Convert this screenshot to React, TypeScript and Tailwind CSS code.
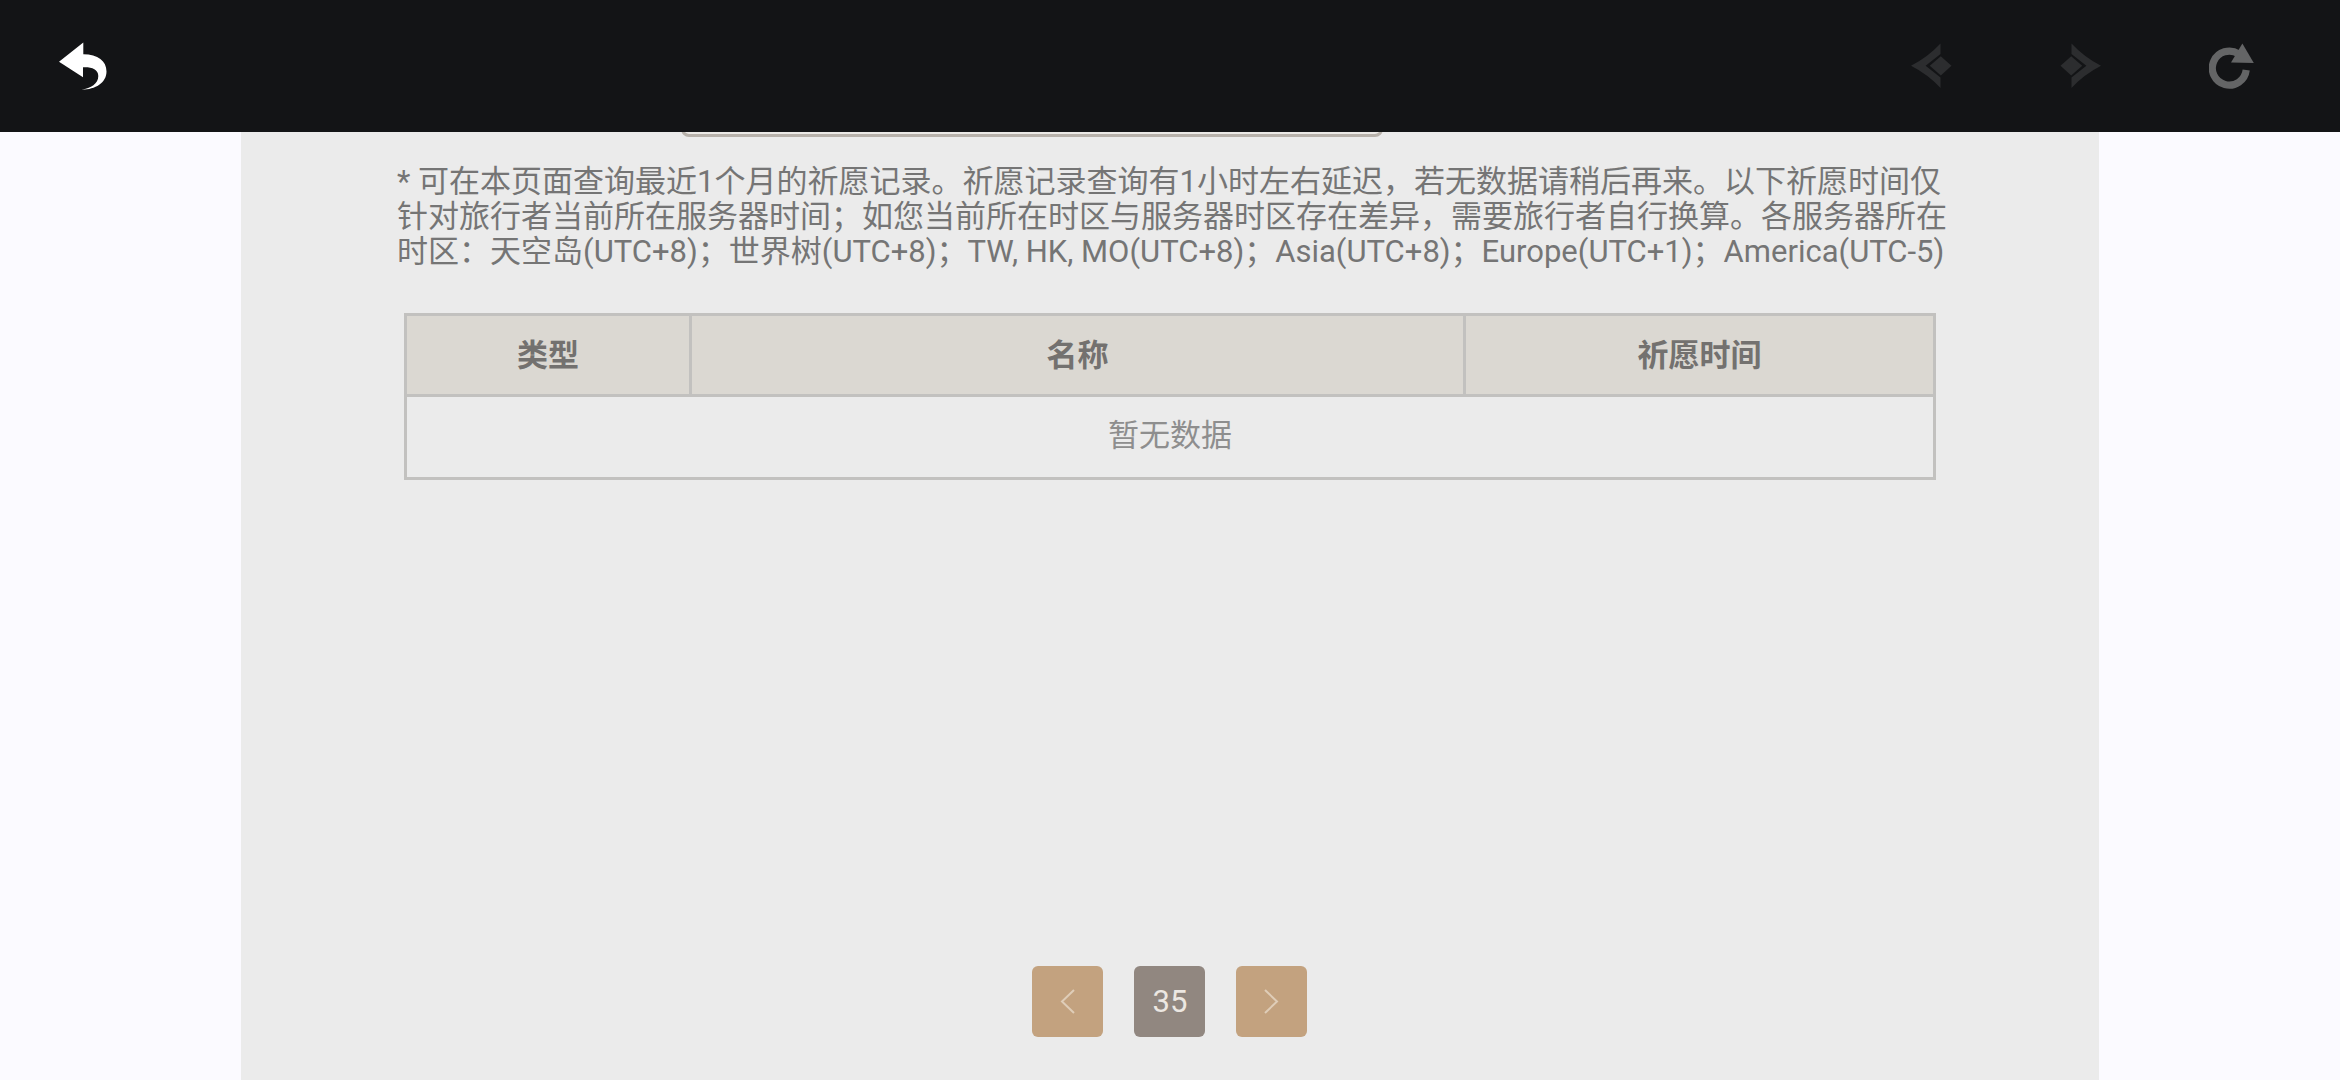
import { useState } from 'react'

const POOLS = ['角色活动祈愿', '武器活动祈愿', '常驻祈愿', '新手祈愿']

function BackIcon() {
  return (
    <svg viewBox="0 0 48 48" className="w-12 h-12" fill="currentColor" aria-hidden="true">
      <path d="M0 19.7L24.3 .5V12.3C39 12.5 47.5 19 47.5 29.5C47.5 41 36 47.8 22.5 47.6C32 46.5 39.3 41.5 39.3 34C39.3 27 32 24.8 24 25.3V35.3Z" />
    </svg>
  )
}

function PrevIcon({ className = '' }: { className?: string }) {
  return (
    <svg viewBox="0 0 41 46" className={`w-[41px] h-[46px] ${className}`} fill="currentColor" aria-hidden="true">
      <path d="M0 22.8Q17 14 29.5 .5V11L14.6 22.8L29.5 34.6V45Q17 31.5 0 22.8Z" />
      <path d="M18.8 22.8L29.8 13.2L40.5 22.8L29.8 32.4Z" />
    </svg>
  )
}

function RefreshIcon() {
  return (
    <svg viewBox="0 0 46 46" className="w-[46px] h-[46px]" aria-hidden="true">
      <path d="M37.2 27A17 17 0 1 1 29.5 10.8" fill="none" stroke="currentColor" strokeWidth="7.2" />
      <path d="M33.4 .4L44.8 20L22 19.6Z" fill="currentColor" />
    </svg>
  )
}

function TopBar() {
  return (
    <header className="flex items-center justify-between h-[132px] shrink-0 pl-[59px] pr-[85px] bg-[#131416]">
      <button type="button" aria-label="返回" className="text-white">
        <BackIcon />
      </button>
      <nav className="flex items-center gap-[108px] text-[#2c2d2f]">
        <button type="button" aria-label="后退" disabled>
          <PrevIcon />
        </button>
        <button type="button" aria-label="前进" disabled>
          <PrevIcon className="-scale-x-100" />
        </button>
        <button type="button" aria-label="刷新" className="text-[#646566]">
          <RefreshIcon />
        </button>
      </nav>
    </header>
  )
}

function RecordTable() {
  return (
    <table className="w-full table-fixed border-collapse text-center">
      <colgroup>
        <col className="w-[285px]" />
        <col />
        <col className="w-[470px]" />
      </colgroup>
      <thead>
        <tr className="h-[81px] bg-[#dbd8d2] text-[#73716f]">
          <th className="border-3 border-[#c2c1bf] font-bold">类型</th>
          <th className="border-3 border-[#c2c1bf] font-bold">名称</th>
          <th className="border-3 border-[#c2c1bf] font-bold">祈愿时间</th>
        </tr>
      </thead>
      <tbody>
        <tr className="h-[83px] text-[#8e8e8e]">
          <td colSpan={3} className="pb-1 border-3 border-[#c2c1bf]">
            暂无数据
          </td>
        </tr>
      </tbody>
    </table>
  )
}

function PageButton({ label, d, onClick }: { label: string; d: string; onClick: () => void }) {
  return (
    <button
      type="button"
      aria-label={label}
      onClick={onClick}
      className="flex items-center justify-center size-[71px] rounded-md bg-[#c3a27f] text-[#dfcdb8]"
    >
      <svg viewBox="0 0 15 25" className="w-[15px] h-[25px]" fill="none" stroke="currentColor" strokeWidth="2" aria-hidden="true">
        <path d={d} />
      </svg>
    </button>
  )
}

export default function App() {
  const [page, setPage] = useState(35)

  return (
    <div className="flex flex-col min-h-screen bg-[#fbfaff] font-[Roboto,'Noto_Sans_CJK_SC',sans-serif] text-[31px] leading-[35px]">
      <TopBar />

      <main className="flex flex-col grow w-[79.4%] mx-auto bg-[#ebebeb]">
        {/* pool picker, scrolled under the top bar */}
        <div className="flex items-end justify-center h-[5px] pr-[276px] overflow-hidden">
          <select
            aria-label="祈愿类型"
            className="appearance-none shrink-0 w-[702px] h-[71px] px-6 rounded-lg border-3 border-[#b7b1aa] bg-[#ebe9e6] text-[#757575]"
          >
            {POOLS.map((pool) => (
              <option key={pool}>{pool}</option>
            ))}
          </select>
        </div>

        <p className="pl-[156px] pr-[142px] pt-[27px] text-[#757575]">
          * 可在本页面查询最近1个月的祈愿记录。祈愿记录查询有1小时左右延迟，若无数据请稍后再来。以下祈愿时间仅针对旅行者当前所在服务器时间；如您当前所在时区与服务器时区存在差异，需要旅行者自行换算。各服务器所在时区：天空岛(UTC+8)；世界树(UTC+8)；TW, HK, MO(UTC+8)；Asia(UTC+8)；Europe(UTC+1)；America(UTC-5)
        </p>

        <section className="px-[163px] pt-11">
          <RecordTable />
        </section>

        <nav aria-label="分页" className="flex justify-center gap-[31px] mt-auto pt-12 pb-[43px]">
          <PageButton label="上一页" d="M14 1L2 12.5L14 24" onClick={() => setPage(Math.max(1, page - 1))} />
          <span className="flex items-center justify-center size-[71px] rounded-md bg-[#918780] text-[#ece7e2]">
            {page}
          </span>
          <PageButton label="下一页" d="M1 1L13 12.5L1 24" onClick={() => setPage(page + 1)} />
        </nav>
      </main>
    </div>
  )
}
